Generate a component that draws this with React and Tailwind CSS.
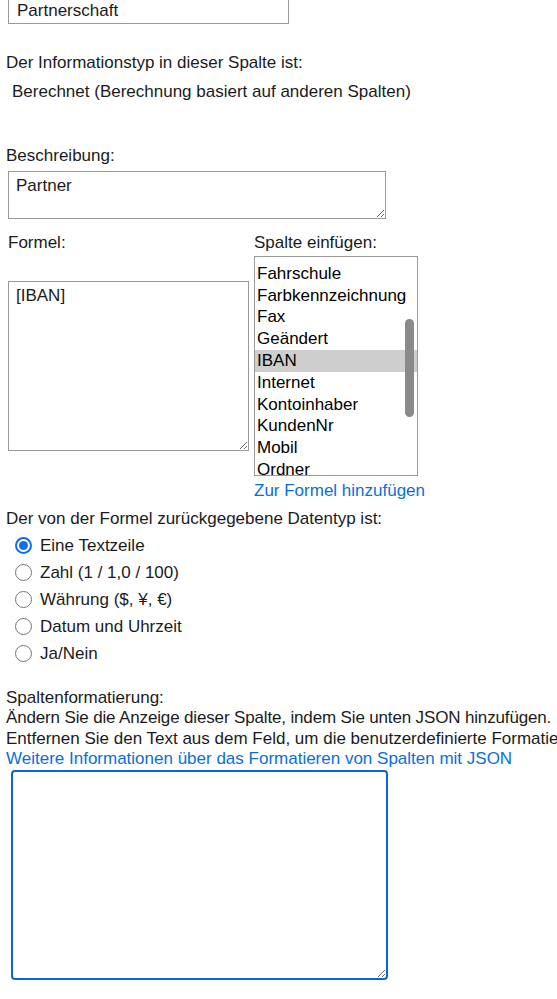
import React from "react";

const items = [
  "E-Mail",
  "Fahrschule",
  "Farbkennzeichnung",
  "Fax",
  "Geändert",
  "IBAN",
  "Internet",
  "Kontoinhaber",
  "KundenNr",
  "Mobil",
  "Ordner",
  "Ort",
];

const radios = [
  { label: "Eine Textzeile", checked: true },
  { label: "Zahl (1 / 1,0 / 100)" },
  { label: "Währung ($, ¥, €)" },
  { label: "Datum und Uhrzeit" },
  { label: "Ja/Nein" },
];

function Radio({ checked }) {
  if (checked) {
    return (
      <span className="flex h-[17px] w-[17px] shrink-0 items-center justify-center rounded-full border-2 border-[#0f6fe8] bg-white">
        <span className="h-[9px] w-[9px] rounded-full bg-[#0f6fe8]" />
      </span>
    );
  }
  return <span className="h-[17px] w-[17px] shrink-0 rounded-full border border-[#767676] bg-white" />;
}

export default function App() {
  return (
    <div className="w-[557px] overflow-hidden bg-white pb-[17px] font-['Liberation_Sans',Arial,sans-serif] text-[17px] leading-[22px] text-[#1b1b1b]">
      <div className="ml-[8px] h-[24px] w-[281px] border border-t-0 border-[#999] pl-[8px] leading-[22px]">
        Partnerschaft
      </div>

      <p className="ml-[6px] mt-[28px]">Der Informationstyp in dieser Spalte ist:</p>
      <p className="ml-[12px] mt-[7px]">Berechnet (Berechnung basiert auf anderen Spalten)</p>

      <p className="ml-[6px] mt-[42px]">Beschreibung:</p>
      <textarea
        className="ml-[8px] mt-[4px] block h-[48px] w-[378px] resize border border-[#999] bg-white px-[7px] pt-[3px] text-[17px] leading-[22px] text-[#1b1b1b] outline-none"
        defaultValue="Partner"
      />

      <div className="mt-[13px] flex items-start">
        <div className="ml-[8px] w-[241px]">
          <p>Formel:</p>
          <textarea
            className="mt-[27px] block h-[170px] w-[241px] resize border border-[#999] bg-white px-[7px] pt-[3px] text-[17px] leading-[22px] text-[#1b1b1b] outline-none"
            defaultValue="[IBAN]"
          />
        </div>
        <div className="ml-[5px]">
          <p>Spalte einfügen:</p>
          <div className="relative mt-[2px] h-[220px] w-[164px] overflow-hidden border border-[#999] bg-white">
            <div className="-mt-[16px]">
              {items.map((it) => (
                <div
                  key={it}
                  className={
                    "h-[21.8px] whitespace-nowrap pl-[2px] leading-[21.8px] text-black " +
                    (it === "IBAN" ? "bg-[#cecece]" : "")
                  }
                >
                  {it}
                </div>
              ))}
            </div>
            <div className="absolute right-[3px] top-[62px] h-[98px] w-[9px] rounded-full bg-[#8a8a8a]" />
          </div>
          <a href="#" className="mt-[4px] block text-[#0b6fd6]">
            Zur Formel hinzufügen
          </a>
        </div>
      </div>

      <p className="ml-[6px] mt-[6px]">Der von der Formel zurückgegebene Datentyp ist:</p>
      <div className="mt-[2px] flex flex-col">
        {radios.map((r) => (
          <label key={r.label} className="flex h-[27px] items-center pl-[15px]">
            <Radio checked={r.checked} />
            <span className="ml-[8px] whitespace-nowrap">{r.label}</span>
          </label>
        ))}
      </div>

      <div className="ml-[6px] mt-[21px] whitespace-nowrap leading-[20.3px]">
        <p>Spaltenformatierung:</p>
        <p className="tracking-[-0.15px]">Ändern Sie die Anzeige dieser Spalte, indem Sie unten JSON hinzufügen.</p>
        <p>Entfernen Sie den Text aus dem Feld, um die benutzerdefinierte Formatierung zu entfernen.</p>
        <a href="#" className="block text-[#0b6fd6]">
          Weitere Informationen über das Formatieren von Spalten mit JSON
        </a>
      </div>
      <textarea className="ml-[11px] mt-[1px] block h-[210px] w-[377px] resize rounded-[4px] border-2 border-[#0a66d1] bg-white p-[6px] text-[17px] leading-[22px] outline-none" />
    </div>
  );
}
